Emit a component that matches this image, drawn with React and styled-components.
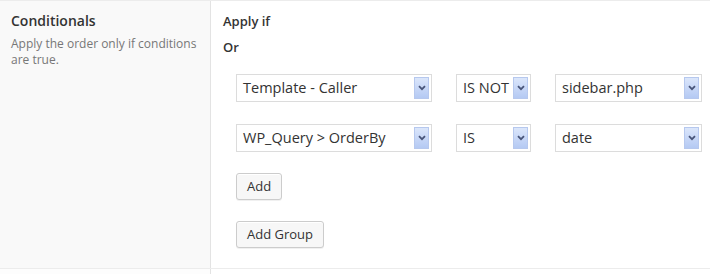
import React from "react";
import styled, { createGlobalStyle } from "styled-components";

const Global = createGlobalStyle`
  html, body { margin: 0; padding: 0; background: #fff; overflow: hidden; }
  body { font-family: "Open Sans", "Liberation Sans", sans-serif; color: #333; }
  * { box-sizing: border-box; }
`;

const Table = styled.div`
  display: flex;
  flex-direction: column;
  width: 710px;
  border-top: 1px solid #ececec;
`;

const Row = styled.div`
  display: flex;
  border-bottom: 1px solid ${(p) => (p.$last ? "transparent" : "#ececec")};
  min-height: ${(p) => p.$height || 0}px;
`;

const Label = styled.div`
  width: 211px;
  flex: none;
  background: ${(p) => p.$bg || "#f9f9f9"};
  border-right: 1px solid #e3e3e3;
  padding: ${(p) => (p.$empty ? "0" : "10px 8px 10px 11px")};
`;

const Title = styled.div`
  font-size: 14px;
  font-weight: 600;
  line-height: 20px;
  color: #333;
`;

const Desc = styled.div`
  font-size: 12px;
  line-height: 16px;
  color: #777;
  margin-top: 5px;
`;

const Content = styled.div`
  flex: 1;
  padding: ${(p) => (p.$empty ? "0" : "10px 0 0 12px")};
  display: flex;
  flex-direction: column;
`;

const Heading = styled.div`
  font-size: 13px;
  font-weight: 600;
  line-height: 20px;
  color: #333;
  margin-bottom: ${(p) => p.$mb || 0}px;
`;

const Group = styled.div`
  display: flex;
  flex-direction: column;
  gap: 21px;
  padding-left: 13px;
  margin-top: 17px;
`;

const Rules = styled.div`
  display: flex;
  flex-direction: column;
  gap: 22px;
`;

const Rule = styled.div`
  display: flex;
  gap: 24px;
`;

const Select = styled.div`
  width: ${(p) => p.$w}px;
  height: 28px;
  border: 1px solid #dcdcdc;
  background: #fff;
  display: flex;
  align-items: stretch;
  padding: 2px;
`;

const SelectText = styled.span`
  flex: 1;
  font-size: 14.5px;
  line-height: 22px;
  color: #333;
  padding-left: 4px;
  white-space: nowrap;
  overflow: hidden;
`;

const Arrow = styled.span`
  width: 15px;
  flex: none;
  background: linear-gradient(#dbe6fb, #b4c9f3);
  border: 1px solid #b6c8ee;
  display: flex;
  align-items: center;
  justify-content: center;
`;

const Button = styled.button`
  align-self: flex-start;
  height: 27px;
  padding: 0 10px;
  font-family: inherit;
  font-size: 13px;
  color: #333;
  background: #f7f7f7;
  border: 1px solid #cccccc;
  border-radius: 3px;
  box-shadow: inset 0 1px 0 #fff, 0 1px 0 rgba(0, 0, 0, 0.06);
  line-height: 25px;
`;

const Chevron = () => (
  <svg width="8" height="6" viewBox="0 0 8 6">
    <path d="M1 1.2 L4 4.2 L7 1.2" fill="none" stroke="#48557a" strokeWidth="1.8" />
  </svg>
);

const Sel = ({ w, children }) => (
  <Select $w={w}>
    <SelectText>{children}</SelectText>
    <Arrow>
      <Chevron />
    </Arrow>
  </Select>
);

const rules = [
  ["Template - Caller", "IS NOT", "sidebar.php"],
  ["WP_Query > OrderBy", "IS", "date"],
];

export default function App() {
  return (
    <>
      <Global />
      <Table>
        <Row $height={268}>
          <Label>
            <Title>Conditionals</Title>
            <Desc>Apply the order only if conditions are true.</Desc>
          </Label>
          <Content>
            <Heading $mb={6}>Apply if</Heading>
            <Heading>Or</Heading>
            <Group>
              <Rules>
                {rules.map((r, i) => (
                  <Rule key={i}>
                    <Sel w={196}>{r[0]}</Sel>
                    <Sel w={75}>{r[1]}</Sel>
                    <Sel w={147}>{r[2]}</Sel>
                  </Rule>
                ))}
              </Rules>
              <Button>Add</Button>
              <Button>Add Group</Button>
            </Group>
          </Content>
        </Row>
        <Row $last $height={6}>
          <Label $bg="#fdfdfd" $empty />
          <Content $empty />
        </Row>
      </Table>
    </>
  );
}
